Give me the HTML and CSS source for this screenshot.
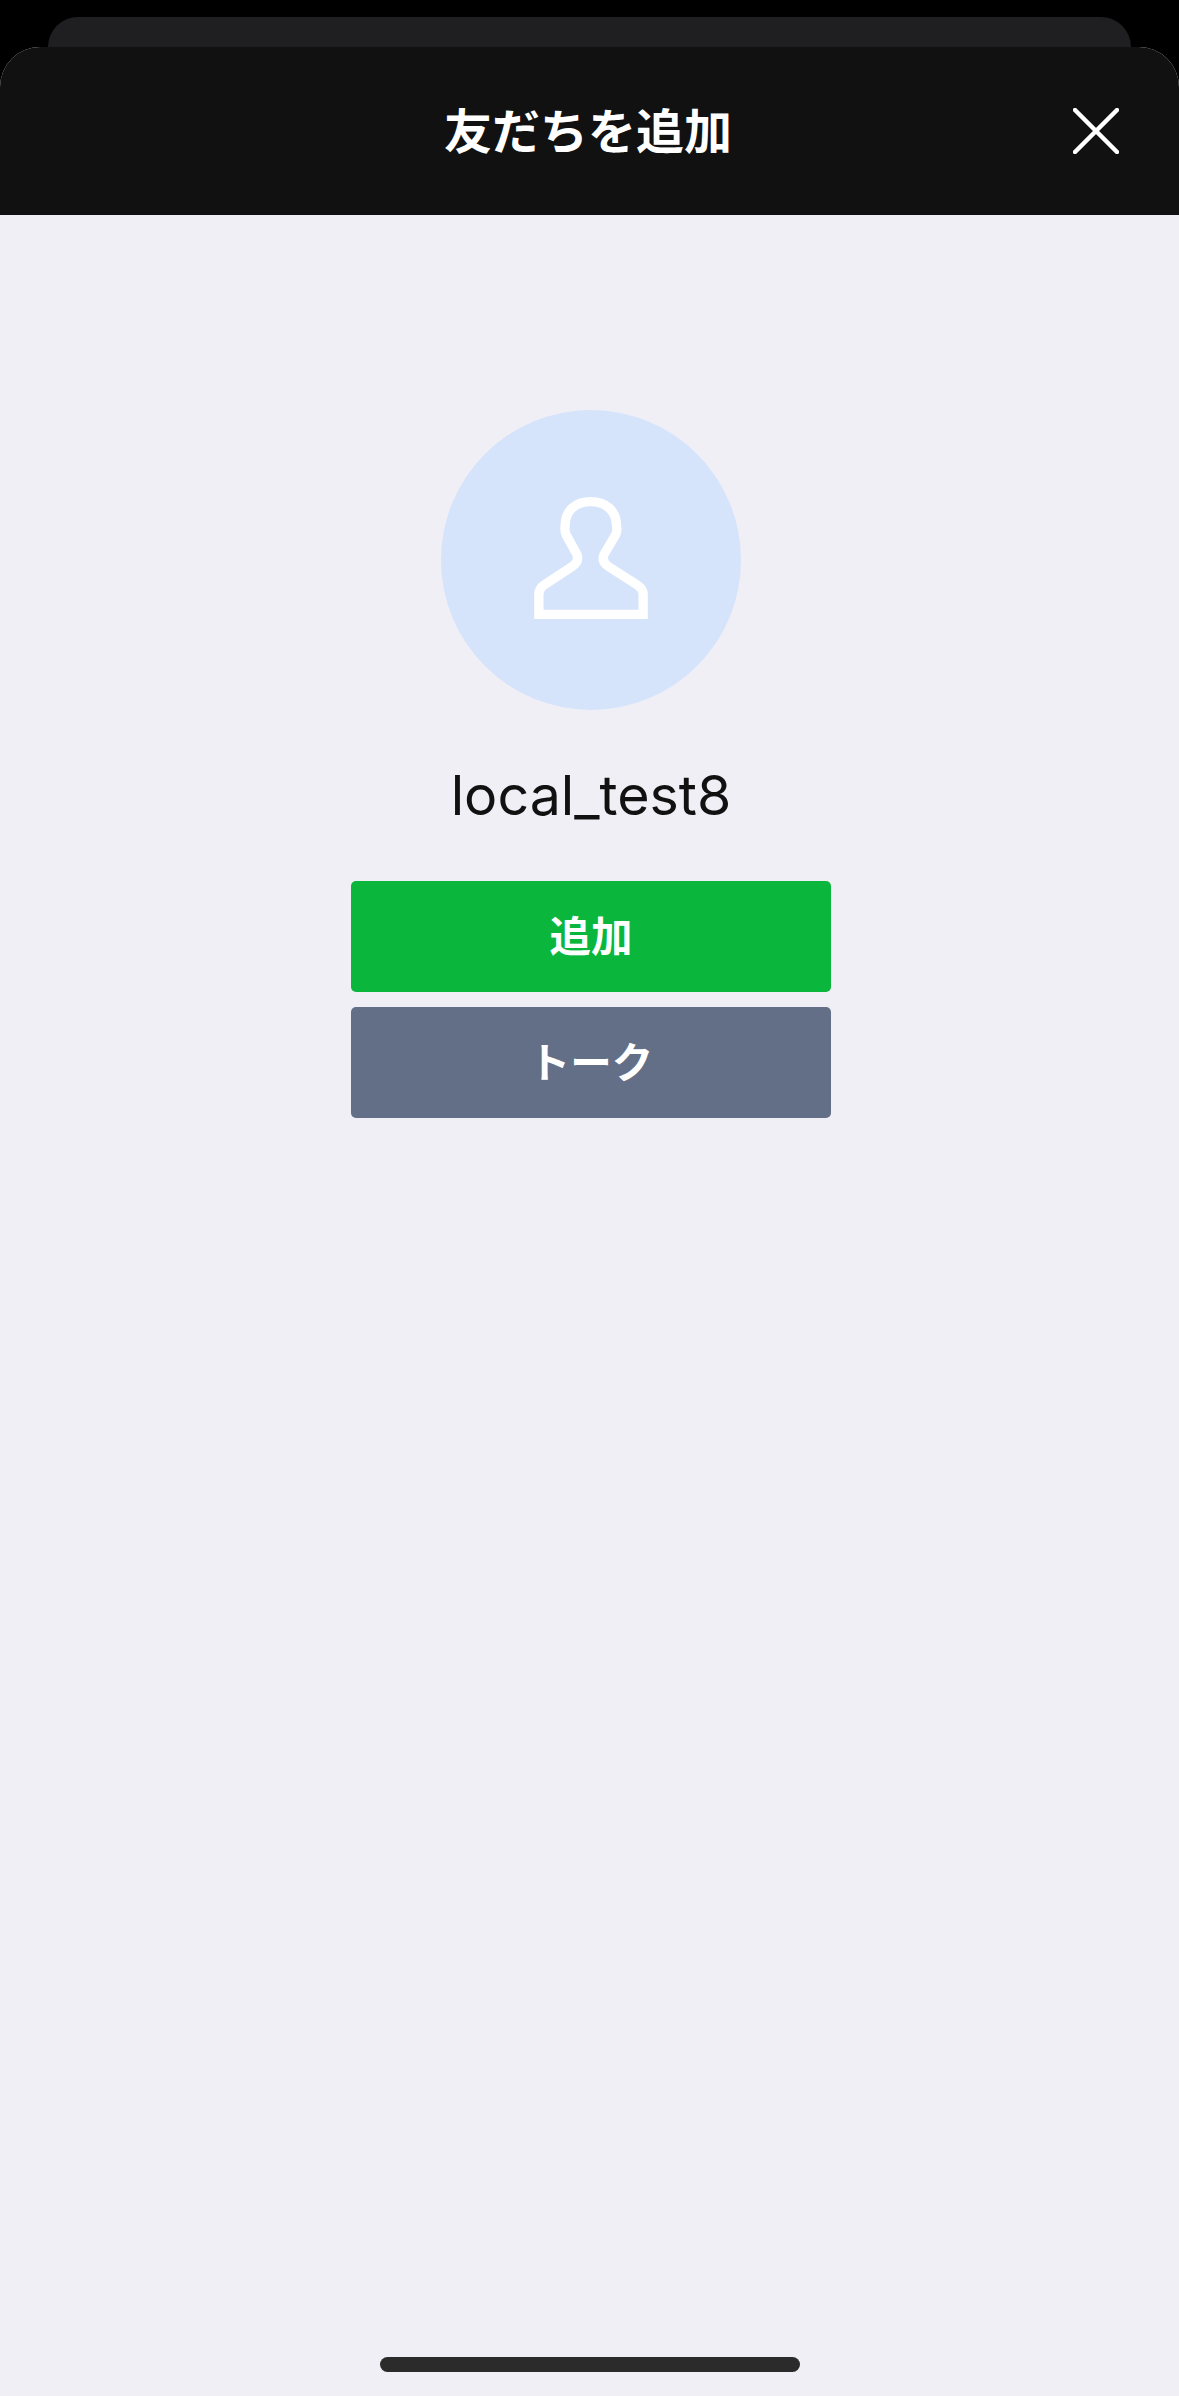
FILE: index.html
```html
<!DOCTYPE html>
<html lang="ja">

<head>
  <title>友だちを追加</title>
  <link rel="stylesheet" href="styles.css">
</head>

<body>
  <div class="back-card"></div>
  <div class="sheet">
    <div class="sheet-header">
      <span></span>
      <div class="sheet-title">友だちを追加</div>
      <button class="close-button" type="button" aria-label="閉じる">
        <svg class="close-icon" viewBox="0 0 46 46">
          <path d="M2 2L44 44M44 2L2 44" />
        </svg>
      </button>
    </div>

    <div class="profile">
      <div class="avatar">
        <svg class="avatar-icon" viewBox="0 0 340 365">
          <path d="M14 351V292Q14 274 30 263L112 209Q136 194 128 172L96 114Q90 102 93 84C93 40 125 14 169 14C213 14 246 40 246 84Q250 102 243 114L209 172Q200 194 224 209L308 263Q326 274 326 292V351Z" />
        </svg>
      </div>
      <div class="profile-name">local_test8</div>
      <button class="action-button add-button" type="button">追加</button>
      <button class="action-button talk-button" type="button">トーク</button>
    </div>

    <div class="home-indicator"></div>
  </div>
</body>

</html>
```

FILE: styles.css
```css
html,
body {
  margin: 0;
  height: 100%;
}

body {
  display: flex;
  flex-direction: column;
  background-color: #000;
  font-family: Inter, "Noto Sans CJK JP", sans-serif;
}

.back-card {
  flex: none;
  height: 30px;
  margin: 17px 48px 0;
  background-color: #1f1f21;
  border-radius: 30px 30px 0 0;
}

.sheet {
  flex: 1;
  display: flex;
  flex-direction: column;
  background-color: #f0eff6;
  border-radius: 40px 40px 0 0;
  overflow: hidden;
}

.sheet-header {
  flex: none;
  display: grid;
  grid-template-columns: 1fr auto 1fr;
  align-items: center;
  height: 168px;
  background-color: #111;
}

.sheet-title {
  font-family: "Noto Sans CJK JP", sans-serif;
  font-size: 48px;
  font-weight: 600;
  color: #fff;
  margin: 0 3px 7px 0;
}

.close-button {
  justify-self: end;
  display: flex;
  padding: 0;
  margin-right: 60px;
  background: none;
  border: none;
  cursor: pointer;
}

.close-icon {
  width: 46px;
  height: 46px;
}

.close-icon path {
  fill: none;
  stroke: #fff;
  stroke-width: 4.5;
  stroke-linecap: round;
}

.profile {
  display: flex;
  flex-direction: column;
  align-items: center;
  padding: 195px 0 0 3px;
}

.avatar {
  display: flex;
  align-items: center;
  justify-content: center;
  width: 300px;
  height: 300px;
  background-color: #d5e3fb;
  border-radius: 50%;
}

.avatar-icon {
  width: 114px;
  height: 122px;
  margin-top: -4px;
}

.avatar-icon path {
  fill: none;
  stroke: #fff;
  stroke-width: 28;
  stroke-linejoin: miter;
}

.profile-name {
  margin: 47px 0 48px;
  font-size: 55.5px;
  line-height: 76px;
  color: #111;
  white-space: nowrap;
}

.action-button {
  width: 480px;
  height: 111px;
  padding: 0 0 6px;
  border: none;
  border-radius: 5px;
  font-family: "Noto Sans CJK JP", sans-serif;
  font-size: 41.5px;
  font-weight: 600;
  color: #fff;
  cursor: pointer;
}

.add-button {
  background-color: #0bb63c;
}

.talk-button {
  margin-top: 15px;
  background-color: #636f87;
}

.home-indicator {
  flex: none;
  align-self: center;
  width: 420px;
  height: 15px;
  margin-top: auto;
  margin-bottom: 24px;
  background-color: #2b2b2b;
  border-radius: 8px;
}
```
